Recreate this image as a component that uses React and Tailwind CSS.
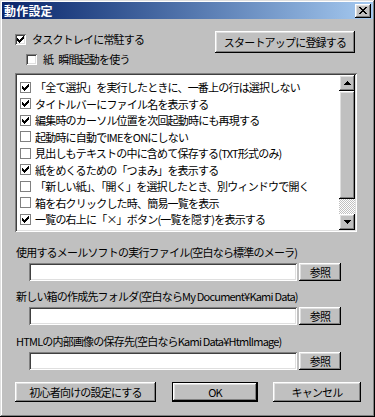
import React from "react";

const raised =
  "shadow-[inset_-1px_-1px_#000,inset_1px_1px_#fff,inset_-2px_-2px_#808080,inset_2px_2px_#dfdfdf]";
const sunken =
  "shadow-[inset_1px_1px_#808080,inset_-1px_-1px_#fff,inset_2px_2px_#404040,inset_-2px_-2px_#dfdfdf]";

function Check() {
  return (
    <svg width="7" height="7" viewBox="0 0 7 7" shapeRendering="crispEdges" className="block">
      <path
        fill="#000"
        d="M0 2h1v3H0z M1 3h1v3H1z M2 4h1v3H2z M3 3h1v3H3z M4 2h1v3H4z M5 1h1v3H5z M6 0h1v3H6z"
      />
    </svg>
  );
}

function SunkBox({ checked }) {
  return (
    <span
      className={`w-[11px] h-[11px] shrink-0 bg-white flex items-center justify-center ${sunken}`}
    >
      {checked && <Check />}
    </span>
  );
}

function ListBox({ checked }) {
  return (
    <span className="w-[11px] h-[11px] shrink-0 bg-white border border-[#808080] flex items-center justify-center">
      {checked && <Check />}
    </span>
  );
}

function Arrow({ down }) {
  return (
    <svg
      width="7"
      height="4"
      viewBox="0 0 7 4"
      shapeRendering="crispEdges"
      className={down ? "block rotate-180" : "block"}
    >
      <path fill="#000" d="M3 0h1v1H3z M2 1h3v1H2z M1 2h5v1H1z M0 3h7v1H0z" />
    </svg>
  );
}

const items = [
  [true, "「全て選択」を実行したときに、一番上の行は選択しない"],
  [true, "タイトルバーにファイル名を表示する"],
  [true, "編集時のカーソル位置を次回起動時にも再現する"],
  [false, "起動時に自動でIMEをONにしない"],
  [false, "見出しもテキストの中に含めて保存する(TXT形式のみ)"],
  [true, "紙をめくるための「つまみ」を表示する"],
  [false, "「新しい紙」、「開く」を選択したとき、別ウィンドウで開く"],
  [false, "箱を右クリックした時、簡易一覧を表示"],
  [true, "一覧の右上に「×」ボタン(一覧を隠す)を表示する"],
];

function FileRow() {
  return (
    <div className="flex mt-[4px] ml-[14px]">
      <div className={`w-[268px] h-[18px] bg-white shrink-0 ${sunken}`} />
      <button
        className={`ml-[2px] w-[42px] h-[18px] shrink-0 bg-[#c0c0c0] flex items-center justify-center leading-none ${raised}`}
      >
        参照
      </button>
    </div>
  );
}

export default function App() {
  return (
    <div
      className={`w-[375px] h-[417px] bg-[#c0c0c0] p-[2px] flex flex-col overflow-hidden text-black text-[11px] tracking-[-0.8px] font-['Noto_Sans_CJK_JP','Noto_Sans',sans-serif] shadow-[inset_-1px_-1px_#000,inset_1px_1px_#dfdfdf,inset_-2px_-2px_#808080,inset_2px_2px_#fff]`}
    >
      {/* Title bar */}
      <div className="h-[17px] shrink-0 flex items-center bg-linear-to-r from-[#0a246a] to-[#a6caf0] pl-[2px] pr-[2px]">
        <span className="text-white font-bold text-[12px] leading-none tracking-[0.2px]">動作設定</span>
        <div
          className={`ml-auto w-[16px] h-[14px] bg-[#c0c0c0] flex items-center justify-center ${raised}`}
        >
          <svg width="8" height="7" viewBox="0 0 8 7" shapeRendering="crispEdges" className="block">
            <path
              fill="#000"
              d="M0 0h2v1H0z M6 0h2v1H6z M1 1h2v1H1z M5 1h2v1H5z M2 2h4v1H2z M3 3h2v1H3z M2 4h4v1H2z M1 5h2v1H1z M5 5h2v1H5z M0 6h2v1H0z M6 6h2v1H6z"
            />
          </svg>
        </div>
      </div>

      {/* Body */}
      <div className="pl-[13px] pr-[16px] flex flex-col">
        <div className="flex items-start">
          <div className="flex flex-col mt-[12px]">
            <div className="flex items-center h-[16px]">
              <SunkBox checked />
              <span className="ml-[6px] leading-[14px]">タスクトレイに常駐する</span>
            </div>
            <div className="flex items-center h-[16px] mt-[4px] ml-[11px]">
              <SunkBox checked={false} />
              <span className="ml-[6px] leading-[14px]">
                <span className="mr-[5px]">紙</span>瞬間起動を使う
              </span>
            </div>
          </div>
          <button
            className={`ml-auto mt-[12px] mr-[2px] w-[140px] h-[22px] bg-[#c0c0c0] flex items-center justify-center leading-none ${raised}`}
          >
            スタートアップに登録する
          </button>
        </div>

        {/* List */}
        <div className={`mt-[6px] w-[342px] h-[159px] p-[2px] bg-white flex ${sunken}`}>
          <div className="flex-1 flex flex-col pt-[4px] pl-[3px] bg-white overflow-hidden">
            {items.map(([c, t], i) => (
              <div key={i} className="h-[16.5px] flex items-center shrink-0">
                <ListBox checked={c} />
                <span className="ml-[4px] leading-[14px] whitespace-nowrap">{t}</span>
              </div>
            ))}
          </div>
          <div className="w-[16px] flex flex-col shrink-0">
            <div className={`h-[16px] bg-[#c0c0c0] flex items-center justify-center shrink-0 ${raised}`}>
              <Arrow />
            </div>
            <div className={`h-[108px] bg-[#c0c0c0] shrink-0 ${raised}`} />
            <div className="flex-1 bg-[repeating-conic-gradient(#ffffff_0%_25%,#c0c0c0_0%_50%)] bg-[length:2px_2px]" />
            <div className={`h-[16px] bg-[#c0c0c0] flex items-center justify-center shrink-0 ${raised}`}>
              <Arrow down />
            </div>
          </div>
        </div>

        {/* File settings */}
        <div className="mt-[13px] pl-[1px] h-[14px] leading-[14px] whitespace-nowrap">
          使用するメールソフトの実行ファイル(空白なら標準のメーラ)
        </div>
        <FileRow />
        <div className="mt-[8px] pl-[1px] h-[14px] leading-[14px] whitespace-nowrap">
          新しい箱の作成先フォルダ(空白ならMy Document¥Kami Data)
        </div>
        <FileRow />
        <div className="mt-[9px] pl-[1px] h-[14px] leading-[14px] whitespace-nowrap">
          HTMLの内部画像の保存先(空白ならKami Data¥HtmlImage)
        </div>
        <FileRow />

        {/* Bottom buttons */}
        <div className="flex mt-[12px]">
          <button
            className={`w-[141px] h-[20px] shrink-0 bg-[#c0c0c0] flex items-center justify-center leading-none ${raised}`}
          >
            初心者向けの設定にする
          </button>
          <button
            className={`ml-[16px] w-[86px] h-[20px] shrink-0 bg-[#c0c0c0] border border-black flex items-center justify-center leading-none ${raised}`}
          >
            OK
          </button>
          <button
            className={`ml-[15px] w-[88px] h-[20px] shrink-0 bg-[#c0c0c0] flex items-center justify-center leading-none ${raised}`}
          >
            キャンセル
          </button>
        </div>
      </div>
    </div>
  );
}
